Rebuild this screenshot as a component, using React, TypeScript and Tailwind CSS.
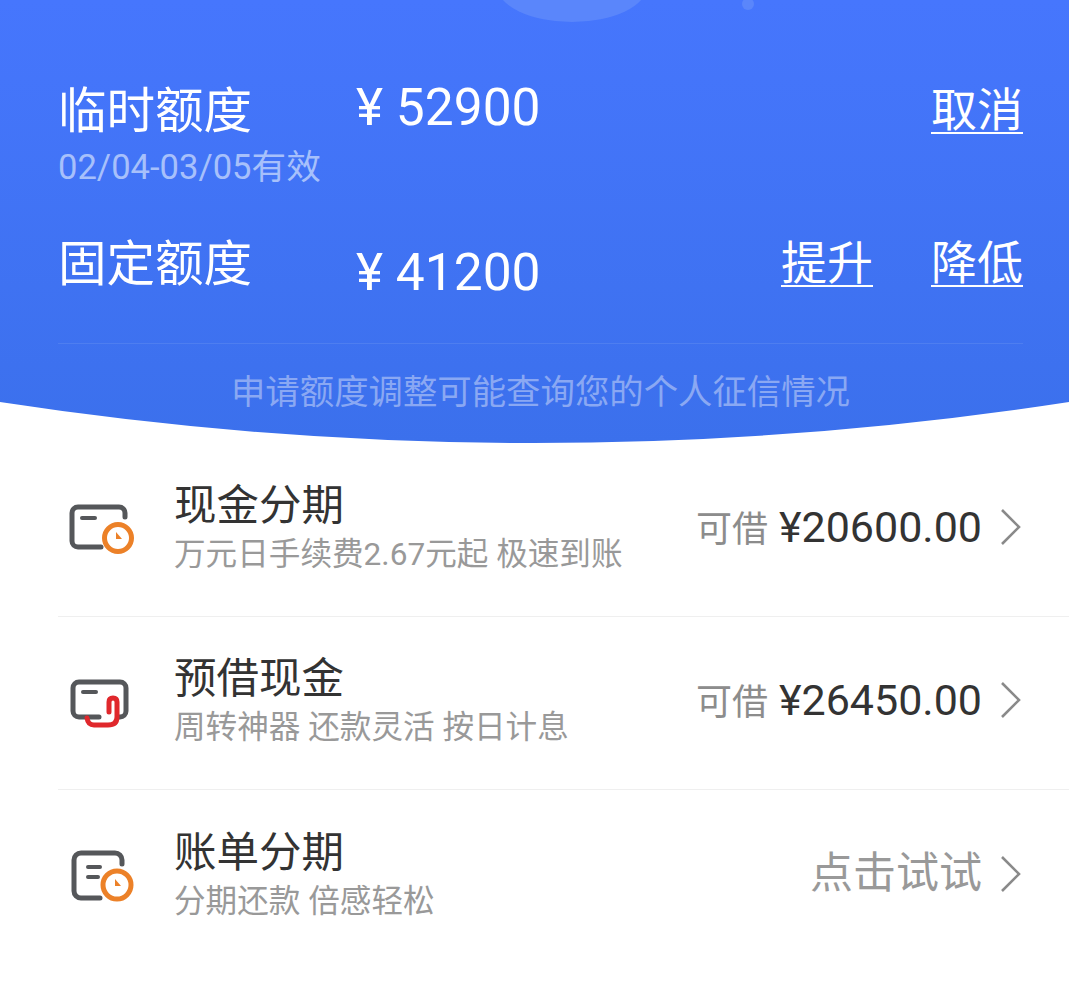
const font = "font-['Roboto','Noto_Sans_CJK_SC',sans-serif]";

function CardClockIcon() {
  return (
    <svg width="70" height="60" viewBox="0 0 70 60" fill="none">
      <path d="M57 15 V11 a6 6 0 0 0 -6 -6 H10 a6 6 0 0 0 -6 6 V39 a6 6 0 0 0 6 6 H33" stroke="#55575a" strokeWidth="5" strokeLinecap="round" />
      <path d="M14 16 H27" stroke="#55575a" strokeWidth="4" strokeLinecap="round" />
      <circle cx="50" cy="36" r="13.5" fill="#fff" stroke="#ec8128" strokeWidth="5" />
      <path d="M48 30 V37 H54 Z" fill="#ec8128" />
    </svg>
  );
}

function CardBillIcon() {
  return (
    <svg width="70" height="60" viewBox="0 0 70 60" fill="none">
      <path d="M54 15 V11 a7 7 0 0 0 -7 -7 H13 a7 7 0 0 0 -7 7 V42 a7 7 0 0 0 7 7 H32" stroke="#55575a" strokeWidth="5" strokeLinecap="round" />
      <path d="M20 18 H32 M20 28 H30" stroke="#55575a" strokeWidth="4" strokeLinecap="round" />
      <circle cx="49" cy="36" r="14" fill="#fff" stroke="#ec8128" strokeWidth="5" />
      <path d="M47 30 V37 H53 Z" fill="#ec8128" />
    </svg>
  );
}

function CardLinkIcon() {
  return (
    <svg width="70" height="60" viewBox="0 0 70 60" fill="none">
      <path d="M15 17 H28" stroke="#55575a" strokeWidth="4" strokeLinecap="round" />
      <path d="M31 42 H11 a6 6 0 0 1 -6 -6 V13 a6 6 0 0 1 6 -6 H52 a6 6 0 0 1 6 6 V36 a6 6 0 0 1 -6 6 H51" stroke="#55575a" strokeWidth="5" strokeLinecap="round" />
      <path d="M19 43 q1 7 7 7 H40 q9 0 9 -8 V27 q0 -4 -4 -4 t-4 4 V37" stroke="#e0282c" strokeWidth="5" strokeLinecap="round" />
    </svg>
  );
}

function Chevron() {
  return (
    <svg width="22" height="38" viewBox="0 0 22 38" fill="none">
      <path d="M2 2 L19 19 L2 36" stroke="#8a8a8a" strokeWidth="2.6" />
    </svg>
  );
}

function QuotaRow({ label, amount, sub, actions, amountClass }: { label: string; amount: string; sub?: string; actions: string[]; amountClass: string }) {
  return (
    <div className="flex items-start">
      <div className="w-[298px] shrink-0">
        <div className="mt-[2px] h-[56px] text-[48.5px] leading-[56px] text-white">{label}</div>
        {sub && <div className="mt-[7px] h-[40px] text-[34.6px] leading-[40px] text-[#a7c0fb]">{sub}</div>}
      </div>
      <div className={`flex-1 whitespace-pre text-[51.5px] leading-[56px] text-white ${amountClass}`}>{amount}</div>
      <div className="flex gap-[58px]">
        {actions.map((a) => (
          <span key={a} className="text-[46px] leading-[56px] text-white underline decoration-2 underline-offset-[6px]">{a}</span>
        ))}
      </div>
    </div>
  );
}

function LoanRow({ icon, title, sub, prefix, value, border }: { icon: React.ReactNode; title: string; sub: string; prefix?: string; value: string; border?: boolean }) {
  return (
    <div className={`flex h-[173px] items-center pr-[47px] pb-[6px] ${border ? "border-b border-[#efefef]" : ""}`}>
      <div className="flex w-[116px] shrink-0 items-center pt-[10px] pl-[10px]">{icon}</div>
      <div className="flex-1">
        <div className="text-[42.5px] leading-[52px] text-[#333]">{title}</div>
        <div className="mt-[4px] text-[31.6px] leading-[38px] text-[#999]">{sub}</div>
      </div>
      <div className="flex items-center gap-[18px]">
        <div className="flex items-baseline gap-[11px]">
          {prefix && <span className="text-[36px] text-[#8c8c8c]">{prefix}</span>}
          <span className={prefix ? "text-[43px] text-[#333]" : "text-[43px] text-[#999]"}>{value}</span>
        </div>
        <Chevron />
      </div>
    </div>
  );
}

export default function App() {
  return (
    <div className={`h-[991px] w-[1069px] overflow-hidden bg-white ${font}`}>
      <div className="relative h-[444px] overflow-hidden bg-gradient-to-b from-[#4676fd] to-[#3b70ec] pl-[58px] pr-[46px] pt-[82px]">
        {/* bubbles at the top */}
        <div className="absolute left-[497px] top-[-50px] h-[72px] w-[150px] rounded-[50%] bg-[#5a86fb]" />
        <div className="absolute left-[742px] top-[-2px] h-[12px] w-[12px] rounded-full bg-[#5a86fb]" />

        <QuotaRow label="临时额度" sub="02/04-03/05有效" amount="¥ 52900" actions={["取消"]} amountClass="mt-[-2px]" />
        <div className="mt-[48px]">
          <QuotaRow label="固定额度" amount="¥ 41200" actions={["提升", "降低"]} amountClass="pt-[10px]" />
        </div>
        <div className="mt-[42px] border-t border-[#4e7ef0]" />
        <div className="mt-[24px] text-center text-[34.4px] leading-[48px] text-[#8aa8f3]">申请额度调整可能查询您的个人征信情况</div>

        <svg className="absolute bottom-0 left-0" width="1069" height="44" viewBox="0 0 1069 44" fill="none">
          <path d="M0 2 Q534 84 1069 2 V44 H0 Z" fill="#fff" />
        </svg>
      </div>

      <div className="pl-[58px]">
        <LoanRow icon={<CardClockIcon />} title="现金分期" sub="万元日手续费2.67元起 极速到账" prefix="可借" value="¥20600.00" border />
        <LoanRow icon={<CardLinkIcon />} title="预借现金" sub="周转神器 还款灵活 按日计息" prefix="可借" value="¥26450.00" border />
        <LoanRow icon={<CardBillIcon />} title="账单分期" sub="分期还款 倍感轻松" value="点击试试" />
      </div>
    </div>
  );
}
